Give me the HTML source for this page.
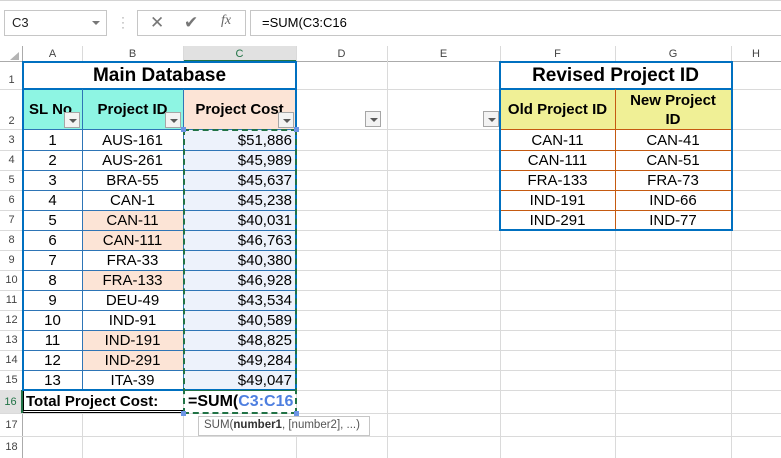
<!DOCTYPE html>
<html><head><meta charset="utf-8"><style>
*{margin:0;padding:0;box-sizing:border-box}
body{width:781px;height:458px;overflow:hidden;background:#fff;font-family:"Liberation Sans",sans-serif;position:relative}
.a{position:absolute}
.c{position:absolute;display:flex;align-items:center;justify-content:center;font-size:15px;color:#000;white-space:nowrap}
.hl{position:absolute;background:#dadada;height:1px}
.vl{position:absolute;background:#dadada;width:1px}
.fb{position:absolute;width:16px;height:16px;border:1px solid #a6a6a6;background:#f3f3f3}
.fb:after{content:"";position:absolute;left:4px;top:6px;border-left:4px solid transparent;border-right:4px solid transparent;border-top:4px solid #595959}
.rh{position:absolute;left:0;width:23px;font-size:11px;color:#444;display:flex;align-items:center;justify-content:center}
.ch{position:absolute;top:46px;height:16px;font-size:11px;color:#444;display:flex;align-items:center;justify-content:center}
</style></head><body>
<div class="a" style="left:0;top:0;width:781px;height:1px;background:#d4d4d4"></div>
<div class="a" style="left:4px;top:10px;width:103px;height:26px;border:1px solid #c6c6c6"></div>
<div class="a" style="left:12px;top:15px;font-size:13px;color:#222">C3</div>
<div class="a" style="left:92px;top:21px;border-left:4px solid transparent;border-right:4px solid transparent;border-top:4px solid #777"></div>
<div class="a" style="left:121px;top:15px;font-size:12px;color:#999;line-height:5px">·<br>·<br>·</div>
<div class="a" style="left:137px;top:10px;width:109px;height:26px;border:1px solid #c6c6c6"></div>
<div class="a" style="left:150px;top:13px;font-size:17px;color:#777">✕</div>
<div class="a" style="left:184px;top:13px;font-size:17px;color:#777">✔</div>
<div class="a" style="left:221px;top:13px;font-size:14px;color:#666;font-family:'Liberation Serif',serif;font-style:italic">fx</div>
<div class="a" style="left:250px;top:10px;width:531px;height:26px;border:1px solid #c6c6c6;border-right:none"></div>
<div class="a" style="left:262px;top:15px;font-size:13px;color:#000">=SUM(C3:C16</div>
<div class="a" style="left:0;top:46px;width:781px;height:16px;background:#fff;border-bottom:1px solid #ababab"></div>
<div class="a" style="left:0;top:46px;width:23px;height:412px;border-right:1px solid #ababab"></div>
<div class="a" style="left:183px;top:46px;width:113px;height:16px;background:#e1e1e1;border-bottom:2px solid #217346"></div>
<div class="a" style="left:10px;top:52px;border-left:9px solid transparent;border-bottom:8px solid #b4b4b4"></div>
<div class="ch" style="left:23px;width:59px">A</div>
<div class="ch" style="left:82px;width:101px">B</div>
<div class="ch" style="left:183px;width:113px;color:#217346">C</div>
<div class="ch" style="left:296px;width:91px">D</div>
<div class="ch" style="left:387px;width:113px">E</div>
<div class="ch" style="left:500px;width:115px">F</div>
<div class="ch" style="left:615px;width:116px">G</div>
<div class="ch" style="left:731px;width:50px">H</div>
<div class="vl" style="left:82px;top:46px;height:412px"></div>
<div class="vl" style="left:183px;top:46px;height:412px"></div>
<div class="vl" style="left:296px;top:46px;height:412px"></div>
<div class="vl" style="left:387px;top:46px;height:412px"></div>
<div class="vl" style="left:500px;top:46px;height:412px"></div>
<div class="vl" style="left:615px;top:46px;height:412px"></div>
<div class="vl" style="left:731px;top:46px;height:412px"></div>
<div class="hl" style="left:0;top:89px;width:781px"></div>
<div class="hl" style="left:0;top:129px;width:781px"></div>
<div class="hl" style="left:0;top:150px;width:781px"></div>
<div class="hl" style="left:0;top:170px;width:781px"></div>
<div class="hl" style="left:0;top:190px;width:781px"></div>
<div class="hl" style="left:0;top:210px;width:781px"></div>
<div class="hl" style="left:0;top:230px;width:781px"></div>
<div class="hl" style="left:0;top:250px;width:781px"></div>
<div class="hl" style="left:0;top:270px;width:781px"></div>
<div class="hl" style="left:0;top:290px;width:781px"></div>
<div class="hl" style="left:0;top:310px;width:781px"></div>
<div class="hl" style="left:0;top:330px;width:781px"></div>
<div class="hl" style="left:0;top:350px;width:781px"></div>
<div class="hl" style="left:0;top:370px;width:781px"></div>
<div class="hl" style="left:0;top:390px;width:781px"></div>
<div class="hl" style="left:0;top:413px;width:781px"></div>
<div class="hl" style="left:0;top:436px;width:781px"></div>
<div class="rh" style="top:62px;height:27px;align-items:flex-end;padding-bottom:3px">1</div>
<div class="rh" style="top:89px;height:41px;align-items:flex-end;padding-bottom:3px">2</div>
<div class="rh" style="top:130px;height:20px">3</div>
<div class="rh" style="top:150px;height:20px">4</div>
<div class="rh" style="top:170px;height:20px">5</div>
<div class="rh" style="top:190px;height:20px">6</div>
<div class="rh" style="top:210px;height:20px">7</div>
<div class="rh" style="top:230px;height:20px">8</div>
<div class="rh" style="top:250px;height:20px">9</div>
<div class="rh" style="top:270px;height:20px">10</div>
<div class="rh" style="top:290px;height:20px">11</div>
<div class="rh" style="top:310px;height:20px">12</div>
<div class="rh" style="top:330px;height:20px">13</div>
<div class="rh" style="top:350px;height:20px">14</div>
<div class="rh" style="top:370px;height:20px">15</div>
<div class="rh" style="top:390px;height:23px;background:#e1e1e1;color:#217346;border-right:2px solid #217346">16</div>
<div class="rh" style="top:413px;height:23px">17</div>
<div class="rh" style="top:436px;height:22px">18</div>

<div class="c" style="left:23px;top:62px;width:273px;height:27px;background:#fff;font-size:19px;font-weight:bold">Main Database</div>
<div class="c" style="left:23px;top:89px;width:59px;height:41px;background:#8ef5e3;font-weight:bold;justify-content:flex-start;padding-left:6px">SL No</div>
<div class="c" style="left:82px;top:89px;width:101px;height:41px;background:#8ef5e3;font-weight:bold">Project ID</div>
<div class="c" style="left:183px;top:89px;width:113px;height:41px;background:#fce4d6;font-weight:bold">Project Cost</div>
<div class="a" style="left:23px;top:88px;width:273px;height:2px;background:#0070c0"></div>
<div class="a" style="left:82px;top:89px;width:1px;height:301px;background:#2e75b6"></div>
<div class="a" style="left:183px;top:89px;width:1px;height:301px;background:#2e75b6"></div>
<div class="fb" style="left:64px;top:112px"></div>
<div class="fb" style="left:165px;top:112px"></div>
<div class="fb" style="left:278px;top:112px"></div>
<div class="fb" style="left:365px;top:111px"></div>
<div class="fb" style="left:483px;top:111px"></div>

<div class="a" style="left:184px;top:130px;width:112px;height:260px;background:#edf2fb"></div>
<div class="a" style="left:83px;top:210px;width:100px;height:40px;background:#fce4d6"></div>
<div class="a" style="left:83px;top:270px;width:100px;height:20px;background:#fce4d6"></div>
<div class="a" style="left:83px;top:330px;width:100px;height:40px;background:#fce4d6"></div>
<div class="a" style="left:23px;top:129px;width:273px;height:1px;background:#2e75b6"></div>
<div class="a" style="left:23px;top:150px;width:273px;height:1px;background:#2e75b6"></div>
<div class="a" style="left:23px;top:170px;width:273px;height:1px;background:#2e75b6"></div>
<div class="a" style="left:23px;top:190px;width:273px;height:1px;background:#2e75b6"></div>
<div class="a" style="left:23px;top:210px;width:273px;height:1px;background:#2e75b6"></div>
<div class="a" style="left:23px;top:230px;width:273px;height:1px;background:#2e75b6"></div>
<div class="a" style="left:23px;top:250px;width:273px;height:1px;background:#2e75b6"></div>
<div class="a" style="left:23px;top:270px;width:273px;height:1px;background:#2e75b6"></div>
<div class="a" style="left:23px;top:290px;width:273px;height:1px;background:#2e75b6"></div>
<div class="a" style="left:23px;top:310px;width:273px;height:1px;background:#2e75b6"></div>
<div class="a" style="left:23px;top:330px;width:273px;height:1px;background:#2e75b6"></div>
<div class="a" style="left:23px;top:350px;width:273px;height:1px;background:#2e75b6"></div>
<div class="a" style="left:23px;top:370px;width:273px;height:1px;background:#2e75b6"></div>
<div class="a" style="left:22px;top:61px;width:275px;height:330px;border:2px solid #0070c0"></div>

<div class="c" style="left:23px;top:130px;width:59px;height:20px">1</div><div class="c" style="left:82px;top:130px;width:101px;height:20px">AUS-161</div><div class="c" style="left:183px;top:130px;width:109px;height:20px;justify-content:flex-end">$51,886</div>
<div class="c" style="left:23px;top:150px;width:59px;height:20px">2</div><div class="c" style="left:82px;top:150px;width:101px;height:20px">AUS-261</div><div class="c" style="left:183px;top:150px;width:109px;height:20px;justify-content:flex-end">$45,989</div>
<div class="c" style="left:23px;top:170px;width:59px;height:20px">3</div><div class="c" style="left:82px;top:170px;width:101px;height:20px">BRA-55</div><div class="c" style="left:183px;top:170px;width:109px;height:20px;justify-content:flex-end">$45,637</div>
<div class="c" style="left:23px;top:190px;width:59px;height:20px">4</div><div class="c" style="left:82px;top:190px;width:101px;height:20px">CAN-1</div><div class="c" style="left:183px;top:190px;width:109px;height:20px;justify-content:flex-end">$45,238</div>
<div class="c" style="left:23px;top:210px;width:59px;height:20px">5</div><div class="c" style="left:82px;top:210px;width:101px;height:20px">CAN-11</div><div class="c" style="left:183px;top:210px;width:109px;height:20px;justify-content:flex-end">$40,031</div>
<div class="c" style="left:23px;top:230px;width:59px;height:20px">6</div><div class="c" style="left:82px;top:230px;width:101px;height:20px">CAN-111</div><div class="c" style="left:183px;top:230px;width:109px;height:20px;justify-content:flex-end">$46,763</div>
<div class="c" style="left:23px;top:250px;width:59px;height:20px">7</div><div class="c" style="left:82px;top:250px;width:101px;height:20px">FRA-33</div><div class="c" style="left:183px;top:250px;width:109px;height:20px;justify-content:flex-end">$40,380</div>
<div class="c" style="left:23px;top:270px;width:59px;height:20px">8</div><div class="c" style="left:82px;top:270px;width:101px;height:20px">FRA-133</div><div class="c" style="left:183px;top:270px;width:109px;height:20px;justify-content:flex-end">$46,928</div>
<div class="c" style="left:23px;top:290px;width:59px;height:20px">9</div><div class="c" style="left:82px;top:290px;width:101px;height:20px">DEU-49</div><div class="c" style="left:183px;top:290px;width:109px;height:20px;justify-content:flex-end">$43,534</div>
<div class="c" style="left:23px;top:310px;width:59px;height:20px">10</div><div class="c" style="left:82px;top:310px;width:101px;height:20px">IND-91</div><div class="c" style="left:183px;top:310px;width:109px;height:20px;justify-content:flex-end">$40,589</div>
<div class="c" style="left:23px;top:330px;width:59px;height:20px">11</div><div class="c" style="left:82px;top:330px;width:101px;height:20px">IND-191</div><div class="c" style="left:183px;top:330px;width:109px;height:20px;justify-content:flex-end">$48,825</div>
<div class="c" style="left:23px;top:350px;width:59px;height:20px">12</div><div class="c" style="left:82px;top:350px;width:101px;height:20px">IND-291</div><div class="c" style="left:183px;top:350px;width:109px;height:20px;justify-content:flex-end">$49,284</div>
<div class="c" style="left:23px;top:370px;width:59px;height:20px">13</div><div class="c" style="left:82px;top:370px;width:101px;height:20px">ITA-39</div><div class="c" style="left:183px;top:370px;width:109px;height:20px;justify-content:flex-end">$49,047</div>

<div class="a" style="left:23px;top:391px;width:160px;height:22px;background:#fff;border-bottom:3px double #000;border-left:1px solid #000"></div>
<div class="c" style="left:26px;top:391px;height:20px;font-weight:bold;justify-content:flex-start">Total Project Cost:</div>
<div class="a" style="left:184px;top:391px;width:112px;height:22px;background:#fff"></div>
<div class="c" style="left:188px;top:391px;height:22px;font-weight:bold;font-size:16px;justify-content:flex-start">=SUM(<span style="color:#4e7fe0">C3:C16</span></div>
<div class="a" style="left:183px;top:129px;width:114px;height:285px;border:2px dashed #217346"></div>
<div class="a" style="left:183px;top:390px;width:114px;height:1px;background:#217346"></div>
<div class="a" style="left:181px;top:127px;width:5px;height:5px;background:#6d95e6"></div>
<div class="a" style="left:294px;top:127px;width:5px;height:5px;background:#6d95e6"></div>
<div class="a" style="left:181px;top:411px;width:5px;height:5px;background:#6d95e6"></div>
<div class="a" style="left:294px;top:411px;width:5px;height:5px;background:#6d95e6"></div>
<div class="a" style="left:198px;top:416px;width:172px;height:20px;background:#fff;border:1px solid #c6c6c6;font-size:11.5px;color:#555;padding:2px 0 0 5px;white-space:nowrap">SUM(<b style="color:#333">number1</b>, [number2], ...)</div>

<div class="c" style="left:500px;top:62px;width:231px;height:27px;background:#fff;font-size:19px;font-weight:bold">Revised Project ID</div>
<div class="c" style="left:500px;top:89px;width:115px;height:41px;background:#f0f096;font-weight:bold">Old Project ID</div>
<div class="c" style="left:615px;top:89px;width:116px;height:41px;background:#f0f096;font-weight:bold;text-align:center;line-height:19px">New Project<br>ID</div>
<div class="a" style="left:500px;top:88px;width:231px;height:2px;background:#0070c0"></div>
<div class="a" style="left:615px;top:89px;width:1px;height:141px;background:#c55a11"></div>
<div class="a" style="left:500px;top:129px;width:231px;height:1px;background:#c55a11"></div>
<div class="a" style="left:500px;top:150px;width:231px;height:1px;background:#c55a11"></div>
<div class="a" style="left:500px;top:170px;width:231px;height:1px;background:#c55a11"></div>
<div class="a" style="left:500px;top:190px;width:231px;height:1px;background:#c55a11"></div>
<div class="a" style="left:500px;top:210px;width:231px;height:1px;background:#c55a11"></div>
<div class="a" style="left:499px;top:61px;width:234px;height:170px;border:2px solid #0070c0"></div>
<div class="c" style="left:500px;top:130px;width:115px;height:20px">CAN-11</div><div class="c" style="left:615px;top:130px;width:116px;height:20px">CAN-41</div>
<div class="c" style="left:500px;top:150px;width:115px;height:20px">CAN-111</div><div class="c" style="left:615px;top:150px;width:116px;height:20px">CAN-51</div>
<div class="c" style="left:500px;top:170px;width:115px;height:20px">FRA-133</div><div class="c" style="left:615px;top:170px;width:116px;height:20px">FRA-73</div>
<div class="c" style="left:500px;top:190px;width:115px;height:20px">IND-191</div><div class="c" style="left:615px;top:190px;width:116px;height:20px">IND-66</div>
<div class="c" style="left:500px;top:210px;width:115px;height:20px">IND-291</div><div class="c" style="left:615px;top:210px;width:116px;height:20px">IND-77</div>
</body></html>
